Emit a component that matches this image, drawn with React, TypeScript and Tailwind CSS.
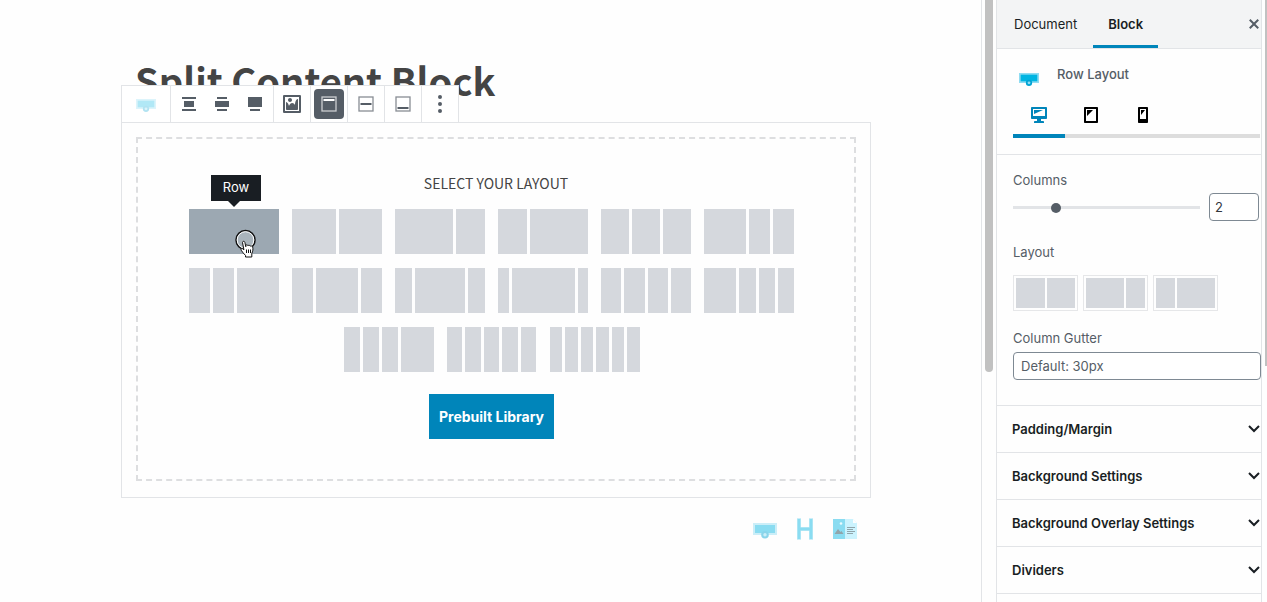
import { useState, type ReactNode } from "react";

const GROW: Record<number, string> = {
  1: "grow",
  2: "grow-[2]",
  3: "grow-[3]",
  6: "grow-[6]",
};

const LAYOUTS: { name: string; columns: number[] }[] = [
  { name: "Row", columns: [1] },
  { name: "Two: Equal", columns: [1, 1] },
  { name: "Two: Left Heavy", columns: [2, 1] },
  { name: "Two: Right Heavy", columns: [1, 2] },
  { name: "Three: Equal", columns: [1, 1, 1] },
  { name: "Three: Left Heavy", columns: [2, 1, 1] },
  { name: "Three: Right Heavy", columns: [1, 1, 2] },
  { name: "Three: Center Heavy", columns: [1, 2, 1] },
  { name: "Three: Wide Center", columns: [1, 3, 1] },
  { name: "Three: Exwide Center", columns: [1, 6, 1] },
  { name: "Four: Equal", columns: [1, 1, 1, 1] },
  { name: "Four: Left Heavy", columns: [2, 1, 1, 1] },
  { name: "Four: Right Heavy", columns: [1, 1, 1, 2] },
  { name: "Five: Equal", columns: [1, 1, 1, 1, 1] },
  { name: "Six: Equal", columns: [1, 1, 1, 1, 1, 1] },
];

const SIDEBAR_LAYOUTS = LAYOUTS.slice(1, 4);

const PANELS = ["Padding/Margin", "Background Settings", "Background Overlay Settings", "Dividers"];

const DASHICONS = {
  alignCenter: "M3 5h14V3H3v2zm12 8V7H5v6h10zM3 17h14v-2H3v2z",
  alignWide: "M5 5h10V3H5v2zm12 8V7H3v6h14zM5 17h10v-2H5v2z",
  alignFull: "M17 13V3H3v10h14zM5 17h10v-2H5v2z",
  image:
    "M2.25 1h15.5c.69 0 1.25.56 1.25 1.25v15.5c0 .69-.56 1.25-1.25 1.25H2.25C1.56 19 1 18.44 1 17.75V2.25C1 1.56 1.56 1 2.25 1zM17 17V3H3v14h14zM10 6c0-1.1-.9-2-2-2s-2 .9-2 2 .9 2 2 2 2-.9 2-2zm3 5s0-6 3-6v10c0 .55-.45 1-1 1H5c-.55 0-1-.45-1-1V8c2 0 3 4 3 4s1-3 3-3 3 2 3 2z",
  more: "M10 1a2 2 0 1 1 0 4 2 2 0 0 1 0-4zm0 7a2 2 0 1 1 0 4 2 2 0 0 1 0-4zm0 7a2 2 0 1 1 0 4 2 2 0 0 1 0-4z",
  close:
    "M14.95 6.46L11.41 10l3.54 3.54-1.41 1.41L10 11.42l-3.53 3.53-1.42-1.42L8.58 10 5.05 6.47l1.42-1.42L10 8.58l3.54-3.53z",
  desktop:
    "M3 2h14c.55 0 1 .45 1 1v10c0 .55-.45 1-1 1h-5v2h2c.55 0 1 .45 1 1v1H5v-1c0-.55.45-1 1-1h2v-2H3c-.55 0-1-.45-1-1V3c0-.55.45-1 1-1zm13 9V4H4v7h12zM5 5h9L5 9V5z",
  tablet:
    "M4 2h12c.55 0 1 .45 1 1v14c0 .55-.45 1-1 1H4c-.55 0-1-.45-1-1V3c0-.55.45-1 1-1zm11 14V4H5v12h10zM6 5h6l-6 6V5z",
  phone:
    "M6 2h8c.55 0 1 .45 1 1v14c0 .55-.45 1-1 1H6c-.55 0-1-.45-1-1V3c0-.55.45-1 1-1zm7 12V4H7v10h6zM8 5h4l-4 5V5z",
};

function Dashicon({ d }: { d: string }) {
  return (
    <svg viewBox="0 0 20 20" className="size-5 fill-current" aria-hidden="true">
      <path d={d} />
    </svg>
  );
}

function RowIcon({ className }: { className: string }) {
  return (
    <svg viewBox="0 0 24 24" className={className} aria-hidden="true">
      <path fill="#8fdcf2" d="M0 6h24v12H0z" />
      <path fill="#00b5e2" d="M2 8h20v8H2z" />
      <circle cx="12" cy="17.8" r="3.8" fill="#00a3d4" />
      <circle cx="12" cy="17.8" r="1.7" fill="#8fdcf2" />
    </svg>
  );
}

function HeadingIcon() {
  return (
    <svg viewBox="0 0 24 24" className="size-6" aria-hidden="true">
      <path fill="#8fdcf2" d="M4 1h4v9h8V1h4v22h-4V14H8v9H4z" />
      <path fill="#00b5e2" d="M4.500 2h3v8.500h9V2h3v20h-3v-8.500h-9V22h-3z" />
    </svg>
  );
}

function InfoBoxIcon() {
  return (
    <svg viewBox="0 0 24 24" className="size-6" aria-hidden="true">
      <path fill="#00b5e2" d="M0 2h12v20H0z" />
      <path fill="#8fe6ff" d="M12 2h8l4 4v16H12z" />
      <path fill="#fff" d="M20 2v4h4z" />
      <circle cx="8" cy="6.500" r="1.300" fill="#d8f6ff" />
      <path fill="#0c3a48" d="M1.500 17l3.500-5 2.500 3 1-1 2 3z" />
      <path stroke="#0c3a48" d="M14 10.500h8M14 12.500h6M14 14.500h8M14 16.500h6" />
    </svg>
  );
}

function VerticalAlignIcon({ bar }: { bar: number }) {
  return (
    <svg viewBox="0 0 20 20" className="size-5" fill="none" aria-hidden="true">
      <rect x="3" y="3" width="14" height="14" stroke="currentColor" strokeWidth="1.300" strokeOpacity="0.7" />
      <rect x="4.500" y={bar} width="11" height="2" fill="currentColor" />
    </svg>
  );
}

function ToolbarGroup({ children }: { children: ReactNode }) {
  return (
    <div className="flex items-center justify-center border-r border-[#e2e4e7] px-[3px] last:border-r-0">
      {children}
    </div>
  );
}

function ToolbarButton({ label, active, children }: { label: string; active?: boolean; children: ReactNode }) {
  return (
    <button
      type="button"
      aria-label={label}
      aria-pressed={active}
      className={
        active
          ? "flex size-[30px] items-center justify-center rounded bg-[#555d66] text-white"
          : "flex size-[30px] items-center justify-center rounded text-[#555d66]"
      }
    >
      {children}
    </button>
  );
}

function BlockToolbar() {
  return (
    <div
      role="toolbar"
      aria-label="Block tools"
      className="absolute bottom-full -left-px flex h-[38px] border border-[#e2e4e7] bg-white"
    >
      <div className="flex w-[49px] items-center justify-center border-r border-[#e2e4e7]">
        <button type="button" aria-label="Change block type" className="opacity-30">
          <RowIcon className="size-5" />
        </button>
      </div>
      <div className="flex items-center gap-[3px] border-r border-[#e2e4e7] px-[3px]">
        <ToolbarButton label="Align center"><Dashicon d={DASHICONS.alignCenter} /></ToolbarButton>
        <ToolbarButton label="Wide width"><Dashicon d={DASHICONS.alignWide} /></ToolbarButton>
        <ToolbarButton label="Full width"><Dashicon d={DASHICONS.alignFull} /></ToolbarButton>
      </div>
      <ToolbarGroup>
        <ToolbarButton label="Background image"><Dashicon d={DASHICONS.image} /></ToolbarButton>
      </ToolbarGroup>
      <ToolbarGroup>
        <ToolbarButton label="Vertical align top" active><VerticalAlignIcon bar={5} /></ToolbarButton>
      </ToolbarGroup>
      <ToolbarGroup>
        <ToolbarButton label="Vertical align middle"><VerticalAlignIcon bar={9} /></ToolbarButton>
      </ToolbarGroup>
      <ToolbarGroup>
        <ToolbarButton label="Vertical align bottom"><VerticalAlignIcon bar={13} /></ToolbarButton>
      </ToolbarGroup>
      <ToolbarGroup>
        <ToolbarButton label="More options"><Dashicon d={DASHICONS.more} /></ToolbarButton>
      </ToolbarGroup>
    </div>
  );
}

function Columns({ columns, gap, color }: { columns: number[]; gap: string; color: string }) {
  return (
    <span className={`flex h-full w-full ${gap}`}>
      {columns.map((size, i) => (
        <span key={i} className={`basis-0 ${GROW[size]} ${color}`} />
      ))}
    </span>
  );
}

function HandPointer() {
  return (
    <svg viewBox="0 0 24 32" className="absolute top-[18px] left-[45px] h-8 w-6" aria-hidden="true">
      <circle cx="11.500" cy="13" r="9.500" fill="#c8cfd5" fillOpacity="0.3" stroke="#111" strokeWidth="1.500" />
      <circle cx="11.500" cy="13" r="8.300" fill="none" stroke="#fff" />
      <path
        fill="#fff"
        stroke="#111"
        strokeLinejoin="round"
        d="M8.500 15.500c0-1.600 2.200-1.600 2.400 0l.9 4.200v-1.200c.6-1 1.900-.8 2.200.3.600-.9 1.900-.6 2.200.4.700-.6 2.300-.2 2.500.9.500 2.200.2 4.200-.9 6.200V30h-6.300v-1.600c-1.600-1.700-3.200-3.200-4.300-5.200-.7-1.200.7-2.200 1.700-1.300l1 .9z"
      />
      <path stroke="#111" d="M12.500 22.500v3.500M14.500 22.500v3.500M16.500 22.500v3.500" />
    </svg>
  );
}

function LayoutPicker() {
  return (
    <div className="flex flex-col items-center border-2 border-dashed border-[#dddee0] pt-8 pb-10">
      <h2 className="font-['Noto_Sans_CJK_SC','Noto_Sans',sans-serif] text-sm leading-6 text-[#444]">
        SELECT YOUR LAYOUT
      </h2>
      <div className="mt-[14px] flex flex-col items-center pr-[9px]">
        <div className="flex max-w-[620px] flex-wrap justify-center gap-x-[13px] gap-y-[14px]">
          {LAYOUTS.map((layout, i) => (
            <button key={layout.name} type="button" aria-label={layout.name} className="relative h-[45px] w-[90px]">
              <Columns
                columns={layout.columns}
                gap="gap-[3px]"
                color={i === 0 ? "bg-[#9ca8b2]" : "bg-[#d5d8dd]"}
              />
              {i === 0 && (
                <>
                  <span className="absolute bottom-[53px] left-[22px] flex h-[26px] w-[50px] items-center justify-center bg-[#191e23] text-[13px] text-white">
                    Row
                    <span className="absolute top-full left-[17px] border-x-[6px] border-t-[6px] border-x-transparent border-t-[#191e23]" />
                  </span>
                  <HandPointer />
                </>
              )}
            </button>
          ))}
        </div>
        <button type="button" className="mt-[22px] h-[45px] bg-[#0085ba] px-[10px] text-sm font-bold text-white">
          Prebuilt Library
        </button>
      </div>
    </div>
  );
}

function Editor() {
  return (
    <main className="min-w-0 flex-1 overflow-hidden pl-[11px]">
      <div className="mx-auto max-w-[750px]">
        <h1 className="px-[14px] pt-[54px] font-['Noto_Sans_CJK_SC','Noto_Sans',sans-serif] text-[38px] leading-[52px] font-bold text-[#444]">
          Split Content Block
        </h1>
        <section aria-label="Row Layout block" className="relative mt-4 border border-[#e2e4e7] px-[14px] pt-[14px] pb-4">
          <BlockToolbar />
          <LayoutPicker />
        </section>
        <div className="mt-[19px] flex justify-end gap-4 pr-[14px] opacity-45">
          <button type="button" aria-label="Add Row Layout"><RowIcon className="size-6" /></button>
          <button type="button" aria-label="Add Advanced Heading"><HeadingIcon /></button>
          <button type="button" aria-label="Add Info Box"><InfoBoxIcon /></button>
        </div>
      </div>
    </main>
  );
}

function DeviceTab({ label, icon, active }: { label: string; icon: string; active?: boolean }) {
  return (
    <button
      type="button"
      role="tab"
      aria-label={label}
      aria-selected={!!active}
      className={
        active
          ? "flex h-[33px] w-[52px] justify-center border-b-4 border-[#0085ba] text-[#0085ba]"
          : "flex h-[33px] w-[52px] justify-center border-b-4 border-[#ddd] text-black"
      }
    >
      <Dashicon d={icon} />
    </button>
  );
}

function Sidebar() {
  const [columns, setColumns] = useState(2);
  return (
    <aside className="w-[266px] shrink-0 border-x border-[#e2e4e7] text-[13px] leading-5">
      <header className="flex h-[49px] items-stretch border-b border-[#e2e4e7] bg-[#f3f4f5] pl-px text-[#191e23]">
        <button type="button" className="px-4">Document</button>
        <button type="button" className="border-b-[3px] border-[#0085ba] px-[15px] pt-[3px] font-semibold">
          Block
        </button>
        <button type="button" aria-label="Close settings" className="-mr-[3px] ml-auto text-[#555d66]">
          <Dashicon d={DASHICONS.close} />
        </button>
      </header>

      <div className="border-b border-[#e2e4e7] pr-px pb-4 pl-4 text-[#555d66]">
        <div className="flex pt-[15px]">
          <span className="flex w-11 px-[6px] pt-1"><RowIcon className="size-5" /></span>
          <h2 className="font-medium">Row Layout</h2>
        </div>
        <div role="tablist" aria-label="Device" className="mt-[17px] flex">
          <DeviceTab label="Desktop" icon={DASHICONS.desktop} active />
          <DeviceTab label="Tablet" icon={DASHICONS.tablet} />
          <DeviceTab label="Mobile" icon={DASHICONS.phone} />
          <span className="flex-1 border-b-4 border-[#ddd]" />
        </div>
      </div>

      <div className="border-b border-[#e2e4e7] pt-[15px] pb-[25px] pl-4 text-[#555d66]">
        <label htmlFor="columns" className="block">Columns</label>
        <div className="mt-[3px] flex items-center gap-[9px] pr-[2px]">
          <input
            id="columns"
            type="range"
            min={1}
            max={6}
            value={columns}
            onChange={(e) => setColumns(Number(e.target.value))}
            className="h-5 min-w-0 flex-1 appearance-none bg-transparent [&::-webkit-slider-runnable-track]:h-[3px] [&::-webkit-slider-runnable-track]:bg-[#e2e4e7] [&::-webkit-slider-thumb]:-mt-[8px] [&::-webkit-slider-thumb]:size-5 [&::-webkit-slider-thumb]:appearance-none [&::-webkit-slider-thumb]:rounded-full [&::-webkit-slider-thumb]:border-[5px] [&::-webkit-slider-thumb]:border-transparent [&::-webkit-slider-thumb]:bg-[#555d66] [&::-webkit-slider-thumb]:bg-clip-padding"
          />
          <input
            type="number"
            aria-label="Columns"
            min={1}
            max={6}
            value={columns}
            onChange={(e) => setColumns(Number(e.target.value))}
            className="h-7 w-[50px] rounded border border-[#7e8993] bg-white px-[5px] text-[#32373c]"
          />
        </div>
        <h3 className="mt-[21px]">Layout</h3>
        <div className="mt-[13px] flex gap-[5px]">
          {SIDEBAR_LAYOUTS.map((layout) => (
            <button
              key={layout.name}
              type="button"
              aria-label={layout.name}
              className="h-9 w-[65px] border border-[#e6e7e9] p-[2px]"
            >
              <Columns columns={layout.columns} gap="gap-[2px]" color="bg-[#d5d8dd]" />
            </button>
          ))}
        </div>
        <label htmlFor="gutter" className="mt-[17px] block">Column Gutter</label>
        <select
          id="gutter"
          className="mt-1 block h-7 w-full appearance-none rounded border border-[#7e8993] bg-white px-[7px] text-[#555d66]"
        >
          <option>Default: 30px</option>
          <option>No Gutter</option>
        </select>
      </div>

      {PANELS.map((title) => (
        <button
          key={title}
          type="button"
          aria-expanded={false}
          className="flex h-[47px] w-full items-center justify-between border-b border-[#e2e4e7] pr-px pl-[15px] font-semibold text-[#191e23]"
        >
          {title}
          <svg viewBox="0 0 12 8" className="h-2 w-3" fill="none" stroke="currentColor" strokeWidth="2" aria-hidden="true">
            <path d="M1 1l5 5 5-5" />
          </svg>
        </button>
      ))}
    </aside>
  );
}

export default function App() {
  return (
    <div className="flex h-screen overflow-hidden bg-[#fefefe] font-[Inter,'Liberation_Sans',sans-serif]">
      <Editor />
      <div className="w-[15px] shrink-0 border-l border-[#e2e4e7] pl-[3px]">
        <div className="h-[372px] w-2 rounded-b-full bg-[#c1c1c1]" />
      </div>
      <Sidebar />
      <div className="flex w-[5px] shrink-0 justify-end">
        <div className="h-[366px] w-[2px] bg-[#c1c1c1]" />
      </div>
    </div>
  );
}
